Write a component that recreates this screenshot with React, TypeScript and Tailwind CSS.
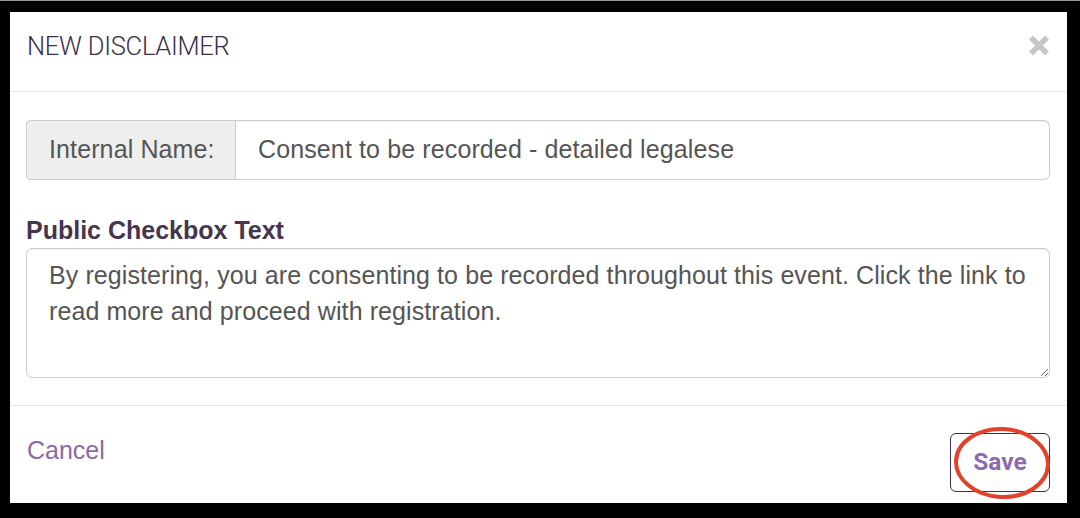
import React from "react";

export default function App() {
  return (
    <div className="w-[1080px] h-[518px] bg-black overflow-hidden relative">
      <div className="h-px bg-[#9a9a9a]" />
      <div className="pt-[11px] pl-[10px]">
        <div className="w-[1057px] h-[491px] bg-white flex flex-col" style={{ fontFamily: '"Liberation Sans", Arial, sans-serif' }}>
          {/* Header */}
          <div className="h-[80px] border-b border-[#e5e5e5] flex items-start justify-between pl-[17px] pr-[17px] pt-[18px]">
            <div className="text-[25.5px] leading-[32px] font-light text-[#3a2e4a] tracking-[-0.25px]" style={{ fontFamily: 'Roboto, "Liberation Sans", sans-serif' }}>
              NEW DISCLAIMER
            </div>
            <svg width="22" height="21" viewBox="0 0 22 21" className="mt-[5px]">
              <path d="M3 2.5 L19 18.5 M19 2.5 L3 18.5" stroke="#c6c6c6" strokeWidth="5.5" strokeLinecap="butt" />
            </svg>
          </div>
          {/* Body */}
          <div className="px-[16px] pt-[28px] pb-[27px] border-b border-[#e5e5e5]">
            <div className="flex h-[60px] w-[1024px] tracking-[0.12px]">
              <div className="w-[210px] shrink-0 bg-[#eeeeee] border border-[#cccccc] rounded-l-[4px] flex items-center pl-[22px] text-[25px] text-[#555555]">
                Internal Name:
              </div>
              <div className="flex-1 border border-l-0 border-[#cccccc] rounded-r-[6px] flex items-center pl-[22px] text-[25px] text-[#555555] shadow-[inset_0_1px_1px_rgba(0,0,0,0.075)]">
                Consent to be recorded - detailed legalese
              </div>
            </div>
            <div className="mt-[33px] mb-[1px] text-[25px] leading-[34px] font-bold text-[#45354f]">
              Public Checkbox Text
            </div>
            <textarea
              readOnly
              defaultValue="By registering, you are consenting to be recorded throughout this event. Click the link to read more and proceed with registration."
              className="block w-[1024px] h-[130px] border border-[#cccccc] rounded-[6px] pl-[22px] pr-[14px] pt-[8px] text-[25px] leading-[36px] tracking-[0.09px] text-[#555555] outline-none shadow-[inset_0_1px_1px_rgba(0,0,0,0.075)]"
              style={{ fontFamily: '"Liberation Sans", Arial, sans-serif' }}
            />
          </div>
          {/* Footer */}
          <div className="flex items-start justify-between pl-[17px] pr-[17px] pt-[27px]">
            <div className="text-[25px] leading-[30px] text-[#8c6aa6] mt-[2px]">Cancel</div>
            <div className="relative">
              <div className="w-[100px] h-[59px] border border-[#3d3150] rounded-[6px] flex items-center justify-center text-[24.5px] font-bold text-[#8d6aab] pb-[1px]" style={{ fontFamily: 'Roboto, "Liberation Sans", sans-serif' }}>
                Save
              </div>
              <svg className="absolute left-[2px] top-[-7px] pointer-events-none" width="100" height="74" viewBox="0 0 100 74">
                <ellipse cx="50" cy="37" rx="46" ry="34" fill="none" stroke="#e4412c" strokeWidth="4" transform="rotate(3 50 37)" />
              </svg>
            </div>
          </div>
        </div>
      </div>
    </div>
  );
}
